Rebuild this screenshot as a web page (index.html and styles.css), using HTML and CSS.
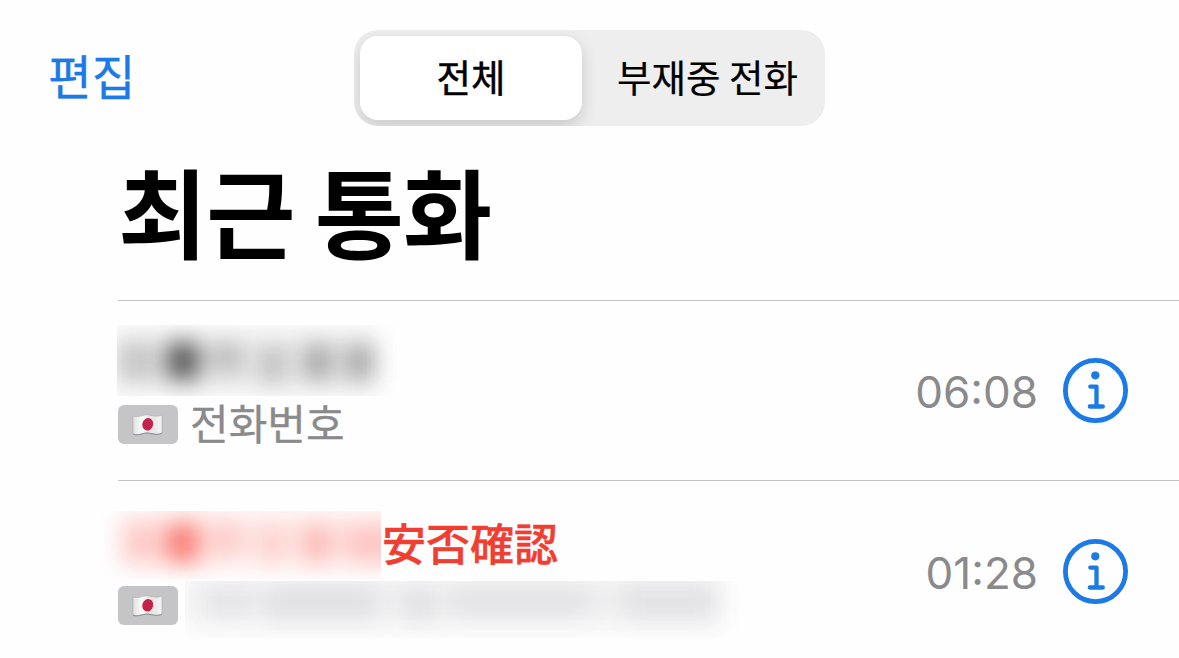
FILE: index.html
```html
<!DOCTYPE html>
<html lang="ko">

<head>
    <meta charset="UTF-8">
    <meta name="viewport" content="width=device-width, initial-scale=1.0">
    <title>최근 통화</title>
    <link rel="stylesheet" href="styles.css">
</head>

<body>
    <header class="toolbar">
        <a class="edit-link" href="#">편집</a>
        <div class="segmented">
            <button type="button" class="segment active">전체</button>
            <button type="button" class="segment missed-tab">부재중 전화</button>
        </div>
    </header>

    <h1>최근 통화</h1>

    <ul class="call-list">
        <li class="call">
            <div class="call-info">
                <div class="call-name">
                    <svg class="hidden-name" width="280" height="71" viewBox="0 0 280 71">
                        <defs>
                            <filter id="soft" x="-30%" y="-80%" width="160%" height="260%" color-interpolation-filters="sRGB">
                                <feGaussianBlur stdDeviation="11"/>
                            </filter>
                            <filter id="softer" x="-30%" y="-60%" width="160%" height="220%" color-interpolation-filters="sRGB">
                                <feGaussianBlur stdDeviation="12"/>
                            </filter>
                            <linearGradient id="cloth">
                                <stop offset="0" stop-color="#e2e2e2"/>
                                <stop offset=".3" stop-color="#fafafa"/>
                                <stop offset=".65" stop-color="#e4e4e4"/>
                                <stop offset="1" stop-color="#f6f6f6"/>
                            </linearGradient>
                        </defs>
                        <rect x="-4" y="10" width="262" height="54" fill="#e6e6e6" filter="url(#softer)"/>
                        <g filter="url(#soft)">
                            <rect x="2" y="18" width="36" height="36" fill="#1c1c1c" fill-opacity=".16"/>
                            <rect x="51" y="18" width="30" height="36" fill="#1c1c1c" fill-opacity=".72"/>
                            <rect x="94" y="18" width="30" height="28" fill="#1c1c1c" fill-opacity=".22"/>
                            <rect x="146" y="22" width="20" height="36" fill="#1c1c1c" fill-opacity=".22"/>
                            <rect x="188" y="20" width="26" height="34" fill="#1c1c1c" fill-opacity=".32"/>
                            <rect x="230" y="20" width="26" height="34" fill="#1c1c1c" fill-opacity=".32"/>
                        </g>
                    </svg>
                </div>
                <div class="call-label">
                    <span class="badge">
                        <svg width="32" height="24" viewBox="0 0 32 24">
                            <path d="M1 3C7 5 11 1 17 2s8 2 13 0v18c-5 2-8 1-13 0S7 23 1 21z" fill="url(#cloth)" stroke="#b0b0b2" stroke-width=".7"/>
                            <path d="M1 21.300c6 2 10-2 16-1s8 2 13 0" fill="none" stroke="#929294" stroke-width="1"/>
                            <ellipse cx="15.700" cy="11.300" rx="5.400" ry="6.300" transform="rotate(16 15.700 11.300)" fill="#c32348"/>
                        </svg>
                    </span>
                    <span class="label-text">전화번호</span>
                </div>
            </div>
            <time>06:08</time>
            <button type="button" class="info" aria-label="정보">
                <svg width="65" height="65" viewBox="0 0 65 65">
                    <circle cx="32.500" cy="32.500" r="30.100" fill="none" stroke="#1b7ae6" stroke-width="4.800"/>
                    <circle cx="32.300" cy="17.300" r="4.100" fill="#1b7ae6"/>
                    <path d="M27.300 28.600H33.500V48.500M26.800 48.500H39.800" fill="none" stroke="#1b7ae6" stroke-width="4.300" stroke-linecap="round" stroke-linejoin="round"/>
                </svg>
            </button>
        </li>

        <li class="call missed">
            <div class="call-info">
                <div class="call-name">
                    <svg class="hidden-name" width="278" height="68" viewBox="0 0 278 68">
                        <rect x="18" y="4" width="290" height="50" fill="#fee6e4" filter="url(#softer)"/>
                        <g filter="url(#soft)">
                            <rect x="22" y="13" width="34" height="38" fill="#f8443a" fill-opacity=".18"/>
                            <rect x="64" y="13" width="31" height="38" fill="#f8443a" fill-opacity=".66"/>
                            <rect x="107" y="12" width="30" height="32" fill="#f8443a" fill-opacity=".16"/>
                            <rect x="159" y="16" width="20" height="36" fill="#f8443a" fill-opacity=".15"/>
                            <rect x="201" y="15" width="26" height="36" fill="#f8443a" fill-opacity=".28"/>
                            <rect x="243" y="15" width="50" height="36" fill="#f8443a" fill-opacity=".2"/>
                        </g>
                    </svg>
                    <span class="name-text" lang="ja">安否確認</span>
                </div>
                <div class="call-label">
                    <span class="badge">
                        <svg width="32" height="24" viewBox="0 0 32 24">
                            <path d="M1 3C7 5 11 1 17 2s8 2 13 0v18c-5 2-8 1-13 0S7 23 1 21z" fill="url(#cloth)" stroke="#b0b0b2" stroke-width=".7"/>
                            <path d="M1 21.300c6 2 10-2 16-1s8 2 13 0" fill="none" stroke="#929294" stroke-width="1"/>
                            <ellipse cx="15.700" cy="11.300" rx="5.400" ry="6.300" transform="rotate(16 15.700 11.300)" fill="#c32348"/>
                        </svg>
                    </span>
                    <svg class="hidden-label" width="556" height="57" viewBox="0 0 556 57">
                        <rect x="0" y="-6" width="536" height="50" fill="#efeff0" filter="url(#softer)"/>
                        <g filter="url(#soft)">
                            <rect x="24" y="6" width="42" height="32" fill="#54546a" fill-opacity=".06"/>
                            <rect x="82" y="6" width="108" height="34" fill="#54546a" fill-opacity=".09"/>
                            <rect x="220" y="8" width="28" height="34" fill="#54546a" fill-opacity=".09"/>
                            <rect x="266" y="6" width="136" height="30" fill="#54546a" fill-opacity=".07"/>
                            <rect x="440" y="4" width="92" height="34" fill="#54546a" fill-opacity=".08"/>
                        </g>
                    </svg>
                </div>
            </div>
            <time>01:28</time>
            <button type="button" class="info" aria-label="정보">
                <svg width="65" height="65" viewBox="0 0 65 65">
                    <circle cx="32.500" cy="32.500" r="30.100" fill="none" stroke="#1b7ae6" stroke-width="4.800"/>
                    <circle cx="32.300" cy="17.300" r="4.100" fill="#1b7ae6"/>
                    <path d="M27.300 28.600H33.500V48.500M26.800 48.500H39.800" fill="none" stroke="#1b7ae6" stroke-width="4.300" stroke-linecap="round" stroke-linejoin="round"/>
                </svg>
            </button>
        </li>
    </ul>
</body>

</html>
```

FILE: styles.css
```css
body {
    font-family: "Noto Sans CJK KR", sans-serif;
    margin: 0;
    padding: 0;
    height: 658px;
    overflow: hidden;
    background-color: #fefefe;
    color: #000;
}

button {
    border: none;
    padding: 0;
    background: none;
    font-family: inherit;
    color: inherit;
    cursor: pointer;
}

.toolbar {
    display: grid;
    grid-template-columns: 306px 471px;
    padding: 30px 0 0 48px;
    height: 96px;
    align-items: center;
}

.edit-link {
    height: 96px;
    color: #1b7ae6;
    font-size: 47.500px;
    line-height: 90px;
    text-decoration: none;
    -webkit-text-stroke: 0.3px #1b7ae6;
}

.segmented {
    display: grid;
    grid-template-columns: 222px 1fr;
    gap: 6px;
    height: 96px;
    padding: 6px;
    box-sizing: border-box;
    border-radius: 24px;
    background-color: #eee;
    overflow: hidden;
}

.segment {
    padding-bottom: 5px;
    font-size: 37.500px;
    line-height: 79px;
    border-radius: 18px;
    white-space: nowrap;
    -webkit-text-stroke: 0.2px #000;
}

.segment.active {
    background-color: #fff;
    box-shadow: 0 6px 16px rgba(0, 0, 0, 0.16);
    -webkit-text-stroke: 0.5px #000;
}

.missed-tab {
    padding-left: 8px;
    word-spacing: -2px;
}

h1 {
    margin: 0 0 0 118px;
    height: 174px;
    font-size: 97px;
    line-height: 165px;
    font-weight: 700;
    letter-spacing: -1px;
    word-spacing: -6px;
}

.call-list {
    list-style: none;
    margin: 0 0 0 118px;
    padding: 0;
}

.call {
    display: flex;
    align-items: center;
    height: 180px;
    box-sizing: border-box;
    padding-right: 51px;
    border-top: 1px solid #c4c4c6;
}

.call-info {
    flex: 1;
    align-self: flex-start;
    padding-top: 24px;
}

.call-name {
    display: flex;
    height: 71px;
    margin-bottom: 9px;
}

.hidden-name {
    display: block;
    flex: none;
    margin-left: -1px;
    overflow: hidden;
}

.call-label {
    display: flex;
    align-items: flex-start;
    height: 39px;
}

.badge {
    display: flex;
    align-items: center;
    justify-content: center;
    width: 60px;
    height: 39px;
    border-radius: 6px;
    background-color: #c5c5c7;
}

.label-text {
    margin-left: 12px;
    font-size: 42px;
    line-height: 34px;
    color: #8a8a8c;
    -webkit-text-stroke: 0.3px #8a8a8c;
}

.missed {
    height: 182px;
}

.missed .call-info {
    padding-top: 30px;
}

.missed .call-name {
    height: 68px;
    margin-bottom: 7px;
}

.missed .hidden-name {
    margin-left: -15px;
}

.name-text {
    margin-left: 1px;
    font-family: "Noto Sans CJK JP", sans-serif;
    font-size: 44px;
    line-height: 63px;
    font-weight: 500;
    color: #f03e33;
    -webkit-text-stroke: 0.4px #f03e33;
}

.hidden-label {
    flex: none;
    margin: -5px 0 0 7px;
    overflow: hidden;
}

time {
    margin-right: 25px;
    padding-top: 3px;
    font-family: Inter, sans-serif;
    font-size: 44px;
    color: #8a8a8c;
}

.info {
    width: 65px;
    height: 65px;
}

.info svg {
    display: block;
}
```
